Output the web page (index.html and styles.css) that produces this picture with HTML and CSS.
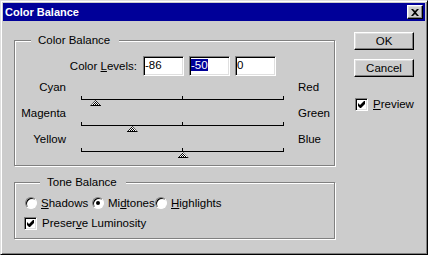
FILE: index.html
```html
<!DOCTYPE html>
<html lang="en">
<head>
  <meta charset="UTF-8">
  <title>Color Balance</title>
  <link rel="stylesheet" href="styles.css">
</head>
<body>
  <div class="window">
    <div class="titlebar">
      <span class="title">Color Balance</span>
      <button class="close" aria-label="Close">
        <svg width="8" height="7" viewBox="0 0 8 7"><path d="M0 0h2l2 2 2-2h2l-3 3.5 3 3.5h-2l-2-2-2 2h-2l3-3.5z" fill="#000"/></svg>
      </button>
    </div>
    <div class="body">
      <div class="groups">
        <fieldset class="group balance">
          <legend>Color Balance</legend>
          <div class="levels">
            <span class="levels-label">Color <u>L</u>evels:</span>
            <div class="field">-86</div>
            <div class="field"><span class="sel">-50</span></div>
            <div class="field">0</div>
          </div>
          <div class="slider">
            <span class="from">Cyan</span>
            <div class="track"><div class="scale"></div><span class="thumb" style="left: 7%"></span></div>
            <span class="to">Red</span>
          </div>
          <div class="slider">
            <span class="from">Magenta</span>
            <div class="track"><div class="scale"></div><span class="thumb" style="left: 25%"></span></div>
            <span class="to">Green</span>
          </div>
          <div class="slider">
            <span class="from">Yellow</span>
            <div class="track"><div class="scale"></div><span class="thumb" style="left: 50%"></span></div>
            <span class="to">Blue</span>
          </div>
        </fieldset>
        <fieldset class="group tone">
          <legend>Tone Balance</legend>
          <div class="modes">
            <label class="opt"><span class="radio"></span><span><u>S</u>hadows</span></label>
            <label class="opt"><span class="radio on"></span><span>Mi<u>d</u>tones</span></label>
            <label class="opt"><span class="radio"></span><span><u>H</u>ighlights</span></label>
          </div>
          <label class="check-row luminosity">
            <span class="check"><svg width="7" height="7" viewBox="0 0 7 7"><path d="M6 0h1v3l-4 4h-1l-2-2v-3l2 2z" fill="#000"/></svg></span>
            <span>Preser<u>v</u>e Luminosity</span>
          </label>
        </fieldset>
      </div>
      <div class="actions">
        <button class="btn">OK</button>
        <button class="btn">Cancel</button>
        <label class="check-row preview">
          <span class="check"><svg width="7" height="7" viewBox="0 0 7 7"><path d="M6 0h1v3l-4 4h-1l-2-2v-3l2 2z" fill="#000"/></svg></span>
          <span><u>P</u>review</span>
        </label>
      </div>
    </div>
  </div>
</body>
</html>
```
FILE: styles.css
```css
body {
  margin: 0;
  background: #cccccc;
  font-family: 'Liberation Sans', Arial, sans-serif;
  font-size: 11.5px;
  color: #000;
}
.window {
  width: 428px;
  height: 255px;
  box-sizing: border-box;
  padding: 2px;
  background: #cccccc;
  border: 1px solid;
  border-color: #dfdfdf #000 #000 #dfdfdf;
  box-shadow: inset 1px 1px #fff, inset -1px -1px #808080;
}
.titlebar {
  height: 18px;
  display: flex;
  align-items: center;
  justify-content: space-between;
  padding: 0 2px;
  background: #000099;
}
.title {
  color: #fff;
  font-weight: bold;
  font-size: 11px;
}
.close {
  width: 16px;
  height: 14px;
  padding: 0;
  display: flex;
  align-items: center;
  justify-content: center;
  background: #cccccc;
  border: 1px solid;
  border-color: #fff #000 #000 #fff;
  box-shadow: inset -1px -1px #808080, inset 1px 1px #dfdfdf;
}
.body {
  display: flex;
  gap: 19px;
  padding: 11px 0 0 11px;
}
.groups {
  display: flex;
  flex-direction: column;
  margin-top: 1px;
}
.group {
  box-sizing: border-box;
  width: 321px;
  margin: 0;
  padding: 0;
  border: 1px solid #808080;
  box-shadow: 1px 1px 0 #fff, inset 1px 1px 0 #fff;
}
.group legend {
  margin-left: 16px;
  padding: 0 9px 0 7px;
  line-height: 14px;
  background: #cccccc;
}
.balance {
  padding: 9px 0 7px;
}
.tone {
  margin-top: 9px;
  padding: 7px 0 8px 9px;
}
.levels {
  display: flex;
  align-items: center;
  gap: 5px;
  height: 20px;
  margin-bottom: 4px;
}
.levels-label {
  width: 122px;
  margin-right: 1px;
  text-align: right;
}
.field {
  width: 41px;
  height: 20px;
  box-sizing: border-box;
  padding: 0 1px;
  line-height: 16px;
  background: #fff;
  border: 1px solid;
  border-color: #808080 #fff #fff #808080;
  box-shadow: inset 1px 1px #000, inset -1px -1px #dfdfdf;
}
.sel {
  background: #000099;
  color: #fff;
}
.slider {
  display: grid;
  grid-template-columns: 52px 203px auto;
  grid-template-rows: 14px 12px;
  column-gap: 14px;
  line-height: 14px;
}
.slider .from {
  grid-column: 1;
  grid-row: 1;
  text-align: right;
  margin-right: 1px;
}
.slider .to {
  grid-column: 3;
  grid-row: 1;
}
.track {
  grid-column: 2;
  grid-row: 2;
  position: relative;
}
.scale {
  height: 3px;
  margin-top: 2px;
  border: solid #000;
  border-width: 0 1px 1px;
  position: relative;
}
.scale::before {
  content: '';
  position: absolute;
  left: 100px;
  top: 0;
  width: 1px;
  height: 3px;
  background: #000;
}
.thumb {
  position: absolute;
  top: 6px;
  width: 11px;
  height: 6px;
  margin-left: -5px;
  clip-path: polygon(50% 0, 100% 100%, 0 100%);
  background:
    linear-gradient(#000, #000) bottom / 100% 1px no-repeat,
    repeating-conic-gradient(#000 0 25%, #fff 0 50%) 0 0 / 2px 2px;
}
.modes {
  display: grid;
  grid-template-columns: 67px 63px auto;
  height: 14px;
  margin-bottom: 6px;
}
.opt {
  display: flex;
  align-items: center;
  gap: 4px;
  line-height: 14px;
  margin-left: 1px;
  white-space: nowrap;
}
.radio {
  flex: none;
  width: 12px;
  height: 12px;
  box-sizing: border-box;
  border-radius: 50%;
  background: #fff;
  border: 1px solid;
  border-color: #808080 #fff #fff #808080;
  box-shadow: inset 1px 1px #000;
  display: flex;
  align-items: center;
  justify-content: center;
}
.radio.on::after {
  content: '';
  width: 4px;
  height: 4px;
  border-radius: 50%;
  background: #000;
}
.check-row {
  display: flex;
  align-items: center;
  gap: 5px;
  height: 14px;
  line-height: 14px;
  white-space: nowrap;
}
.check {
  flex: none;
  width: 13px;
  height: 13px;
  box-sizing: border-box;
  background: #fff;
  border: 1px solid;
  border-color: #808080 #fff #fff #808080;
  box-shadow: inset 1px 1px #000, inset -1px -1px #dfdfdf;
  display: flex;
  align-items: center;
  justify-content: center;
}
.actions {
  display: flex;
  flex-direction: column;
  align-items: flex-start;
}
.btn {
  width: 60px;
  height: 18px;
  padding: 0;
  margin-bottom: 9px;
  font: inherit;
  color: #000;
  background: #cccccc;
  border: 1px solid;
  border-color: #fff #000 #000 #fff;
  box-shadow: inset -1px -1px #808080, inset 1px 1px #dfdfdf;
}
.preview {
  margin: 11px 0 0 1px;
}
```
